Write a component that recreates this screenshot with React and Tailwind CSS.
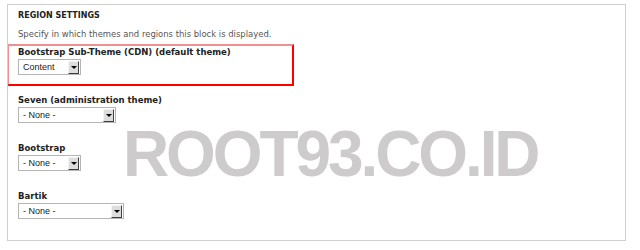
const themes = [
  { name: 'Bootstrap Sub-Theme (CDN) (default theme)', value: 'Content', width: 'w-[63px]', highlight: true },
  { name: 'Seven (administration theme)', value: '- None -', width: 'w-[98px]' },
  { name: 'Bootstrap', value: '- None -', width: 'w-[63px]' },
  { name: 'Bartik', value: '- None -', width: 'w-[106px]' },
];

function FakeSelect({ value, width }) {
  return (
    <div className={`${width} h-[16px] flex items-center justify-between border border-[#b5b5b5] bg-white pl-[4px] pr-px`}>
      <span className="text-[9px] leading-none text-[#222] font-['Liberation_Sans',Arial,sans-serif]">{value}</span>
      <span className="w-[11px] h-[13px] flex items-center justify-center bg-[#dedcdc] border border-t-[#f4f4f4] border-l-[#f4f4f4] border-r-[#404040] border-b-[#404040]">
        <span className="w-0 h-0 border-l-[3px] border-r-[3px] border-t-[3px] border-l-transparent border-r-transparent border-t-black" />
      </span>
    </div>
  );
}

function ThemeRow({ theme }) {
  const inner = (
    <>
      <div className="text-[8.5px] leading-[12px] font-bold text-[#222]">{theme.name}</div>
      <div className="mt-[1px]">
        <FakeSelect value={theme.value} width={theme.width} />
      </div>
    </>
  );
  if (theme.highlight) {
    return (
      <div className="-ml-[11px] w-[287px] h-[42px] border-2 border-t-[#f19090] border-l-[#f19090] border-r-[#ff0000] border-b-[#ff0000] pl-[9px]">
        {inner}
      </div>
    );
  }
  return <div className="mt-[8px] h-[40px]">{inner}</div>;
}

export default function App() {
  return (
    <div className="relative w-[640px] h-[250px] bg-white overflow-hidden font-['DejaVu_Sans',Verdana,sans-serif]">
      <div className="absolute left-[7px] top-[4px] w-[619px] h-[237px] border border-[#cfcfcf]" />
      <div className="pt-[10px] pl-[18px]">
        <div className="text-[8px] leading-[12px] font-bold text-[#222] uppercase">Region Settings</div>
        <div className="mt-[6px] text-[8.45px] leading-[12px] text-[#555]">
          Specify in which themes and regions this block is displayed.
        </div>
        <div className="mt-[4px] flex flex-col">
          {themes.map((t) => (
            <ThemeRow key={t.name} theme={t} />
          ))}
        </div>
      </div>
      <div className="absolute left-[123px] top-[116px] text-[64px] leading-[76px] font-bold tracking-[-3.1px] text-[#cdcbcb] font-['Liberation_Sans',Arial,sans-serif] whitespace-nowrap pointer-events-none">
        ROOT93.CO.ID
      </div>
    </div>
  );
}
